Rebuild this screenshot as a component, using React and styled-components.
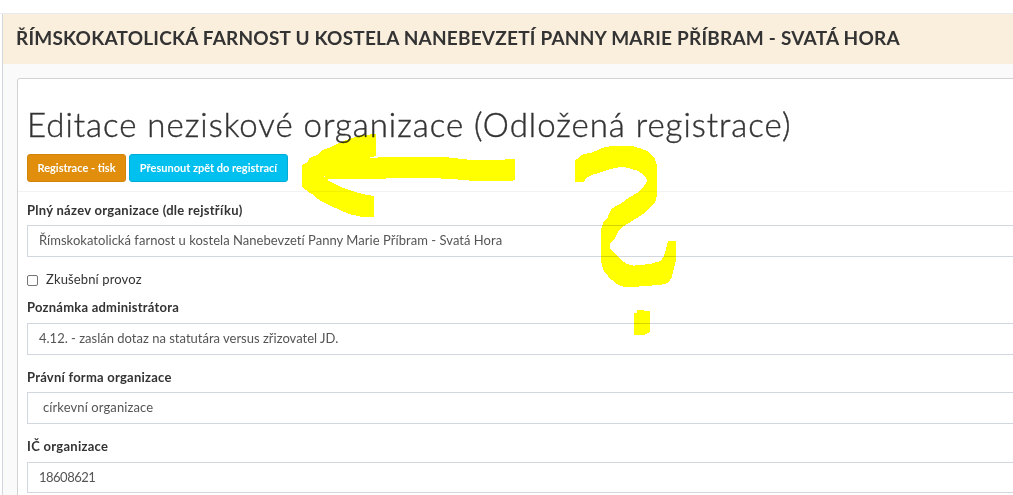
import React from 'react';
import styled, { createGlobalStyle } from 'styled-components';

const GlobalStyle = createGlobalStyle`
* {
    box-sizing: border-box;
}
body {
    margin: 0;
    background: #fff;
    overflow: hidden;
    color: #333;
    font-family: Lato, "Open Sans", sans-serif;
}
`;

const Page = styled.div`
position: relative;
display: flex;
flex-direction: column;
width: 100%;
height: 495px;
padding-top: 13px;
overflow: hidden;
`;

const Body = styled.div`
display: flex;
flex: 1;
min-height: 0;
border-top: 1px solid #e9eaec;
padding-left: 2px;
`;

const Content = styled.div`
flex: 1;
min-width: 0;
border-left: 1px solid #d2d6de;
background: #fafafa;
`;

const TitleBar = styled.div`
height: 50px;
padding: 0 13px;
background: #faeedd;
line-height: 47px;
font-size: 19px;
font-weight: 700;
white-space: nowrap;
letter-spacing: 0.215px;
`;

const Panel = styled.div`
height: 500px;
margin: 14px -5px 0 14px;
border: 1px solid #d2d2d2;
border-radius: 3px;
background: #fff;
`;

const PanelHeader = styled.div`
height: 113px;
padding: 25px 9px 0;
border-bottom: 1px solid #f2f2f2;
`;

const Heading = styled.h1`
height: 50px;
margin: 0;
line-height: 40px;
font-size: 33px;
font-weight: 300;
color: #333;
white-space: nowrap;
letter-spacing: 0.98px;
-webkit-text-stroke: 0.4px #333;
`;

const Buttons = styled.div`
display: flex;
gap: 3px;
`;

const Button = styled.button`
width: ${props => props.$width}px;
height: 28px;
padding: 0;
border: 1px solid ${props => props.$border};
border-radius: 3px;
background: ${props => props.$color};
color: #fff;
font-family: inherit;
font-size: 11px;
font-weight: 700;
line-height: 24px;
white-space: nowrap;
`;

const Form = styled.div`
padding: 8px 0 0 9px;
`;

const Field = styled.div`
height: ${props => props.$height}px;
`;

const Label = styled.label`
display: block;
height: ${props => props.$height || 25}px;
line-height: 20px;
font-size: 13px;
font-weight: 700;
white-space: nowrap;
letter-spacing: ${props => props.$spacing || 0}px;
`;

const Value = styled.div`
height: ${props => props.$height || 32}px;
padding-left: ${props => props.$indent || 11}px;
border: 1px solid #d2d6de;
border-right: 0;
line-height: 29px;
font-size: 13px;
color: #555;
white-space: nowrap;
letter-spacing: ${props => props.$spacing || 0}px;
`;

const CheckRow = styled.label`
display: flex;
align-items: center;
gap: 8px;
height: 26px;
margin-bottom: 5px;
font-size: 13px;
line-height: 20px;
letter-spacing: 0.13px;

& > input {
    appearance: none;
    width: 11px;
    height: 11px;
    margin: 2px 0 0;
    border: 1px solid #767676;
    border-radius: 2px;
    background: #fff;
}
`;

const Marker = styled.svg`
position: absolute;
top: 0;
left: 0;
pointer-events: none;
mix-blend-mode: multiply;
fill: #ff0;
shape-rendering: crispEdges;
`;

const App = () => {
    return (
        <>
            <GlobalStyle />
            <Page>
                <Body>
                    <Content>
                        <TitleBar>ŘÍMSKOKATOLICKÁ FARNOST U KOSTELA NANEBEVZETÍ PANNY MARIE PŘÍBRAM - SVATÁ HORA</TitleBar>
                        <Panel>
                            <PanelHeader>
                                <Heading>Editace neziskové organizace (Odložená registrace)</Heading>
                                <Buttons>
                                    <Button $width={99} $color="#e08e0b" $border="#d28309">Registrace - tisk</Button>
                                    <Button $width={159} $color="#00c0ef" $border="#00acd6">Přesunout zpět do registrací</Button>
                                </Buttons>
                            </PanelHeader>
                            <Form>
                                <Field $height={66}>
                                    <Label $spacing={0.28}>Plný název organizace (dle rejstříku)</Label>
                                    <Value $spacing={0.03}>Římskokatolická farnost u kostela Nanebevzetí Panny Marie Příbram - Svatá Hora</Value>
                                </Field>
                                <CheckRow>
                                    <input type="checkbox" />
                                    <span>Zkušební provoz</span>
                                </CheckRow>
                                <Field $height={70}>
                                    <Label $height={26} $spacing={0.23}>Poznámka administrátora</Label>
                                    <Value>4.12. - zaslán dotaz na statutára versus zřizovatel JD.</Value>
                                </Field>
                                <Field $height={69}>
                                    <Label $spacing={0.23}>Právní forma organizace</Label>
                                    <Value $indent={15} $spacing={0.1}>církevní organizace</Value>
                                </Field>
                                <Field $height={60}>
                                    <Label $height={26} $spacing={0.28}>IČ organizace</Label>
                                    <Value $height={31} $spacing={-0.5}>18608621</Value>
                                </Field>
                            </Form>
                        </Panel>
                    </Content>
                </Body>
                <Marker width="1013" height="495" viewBox="0 0 1013 495">
                    <path
                        transform="translate(290 125) scale(0.33333)"
                        fillRule="evenodd"
                        d="M257 27V94L240 96V98H263V95H477V98H505V101H532V104H645V101H676V165H670V168H538V165H505V162H453V159H288V161H111L116 168L138 179L163 190L200 202L228 209L252 213V276H216L177 267L143 252L113 238L90 227L67 208L53 199L36 185V120L52 113L59 99L81 90L97 76L120 67L141 57L172 44L213 31ZM102 153H106V156H102Z"
                    />
                    <g transform="translate(560 135) scale(0.33333)">
                        <path d="M45 141V77L67 59L97 52L127 39L153 33H216L247 42L267 51L283 69L292 93V178L285 204L270 217L253 235L221 255L190 274L175 289L163 314L149 328V341L163 354L183 375L201 387L220 392L271 387L302 378L312 364L324 318H348V375L335 429L324 443L310 448L252 454L192 456L175 450L150 430L131 408L123 378V285L130 263L142 249L154 221L183 206L205 189L231 174L249 158L262 138L258 126L235 108L205 99L184 95L150 103L99 119L82 127L70 141Z" />
                        <path d="M231 525H252L254 528H270V590L258 597L254 600H222V536L231 532Z" />
                    </g>
                </Marker>
            </Page>
        </>
    );
};

export default App;
